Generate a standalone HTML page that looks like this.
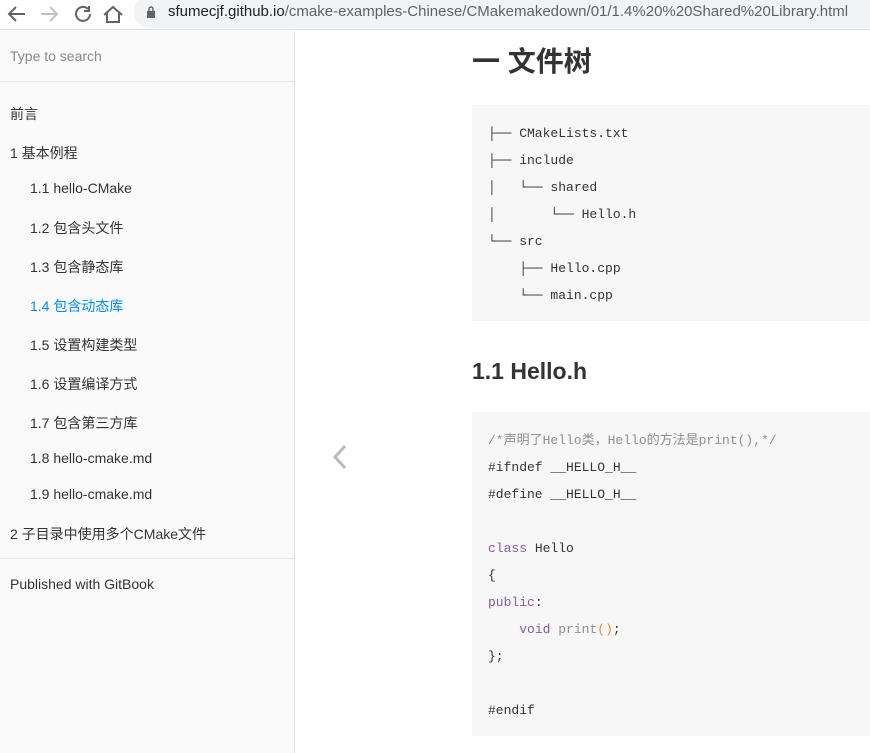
<!DOCTYPE html>
<html><head><meta charset="utf-8"><style>
*{margin:0;padding:0;box-sizing:border-box}
body{width:870px;height:753px;overflow:hidden;background:#fff;font-family:"Liberation Sans","Noto Sans CJK SC",sans-serif;position:relative}
.bar{position:absolute;left:0;top:0;width:870px;height:30px;background:#fff;border-bottom:1px solid #dadce0}
.url{position:absolute;left:134px;top:-4px;width:760px;height:32px;background:#f1f3f4;border-radius:16px;font-size:15px;line-height:32px;padding-left:34px;color:#202124}
.url span{color:#5f6368}
.side{position:absolute;left:0;top:31px;width:295px;height:722px;background:#fafafa;border-right:1px solid #e6e6e6}
.search{height:51px;border-bottom:1px solid #e6e6e6;font-size:14px;color:#888;padding:17px 10px}
.nav{font-size:14px;color:#333;position:absolute;left:10px}
.sub{left:30px}
h1{position:absolute;left:472px;top:40px;font-size:28px;font-weight:bold;color:#333}
h2{position:absolute;left:472px;top:358px;font-size:23px;font-weight:bold;color:#333}
pre{position:absolute;left:472px;width:398px;background:#f7f7f7;font-family:"Liberation Mono","Noto Sans CJK SC",monospace;font-size:13px;line-height:27px;color:#333;padding:15px 16px 14px}
.c{color:#8e908c}.k{color:#8959a8}.o{color:#f5871f}
</style></head><body>
<div class="bar">
<svg style="position:absolute;left:0;top:3px" width="130" height="22" fill="none" stroke-width="2">
<path d="M25 11H10M16 4l-7 7 7 7" stroke="#5f6368"/>
<path d="M41 11h15M50 4l7 7-7 7" stroke="#bdc1c6"/>
<path d="M88 6a7 7 0 1 0 2 5M89 3v5h-5" stroke="#5f6368"/>
<path d="M104 12l9-8 9 8M107 10v9h12v-9" stroke="#5f6368"/>
</svg>
<div class="url"><svg style="position:absolute;left:12px;top:10px" width="10" height="12"><rect x="1" y="5" width="8" height="7" fill="#5f6368"/><path d="M3 5V3a2 2 0 0 1 4 0v2" stroke="#5f6368" fill="none" stroke-width="1.5"/></svg>sfumecjf.github.io<span>/cmake-examples-Chinese/CMakemakedown/01/1.4%20%20Shared%20Library.html</span></div>
</div>
<div class="side">
<div class="search">Type to search</div>
<div class="nav" style="top:73px">前言</div>
<div class="nav" style="top:112px">1 基本例程</div>
<div class="nav sub" style="top:149px">1.1 hello-CMake</div>
<div class="nav sub" style="top:187px">1.2 包含头文件</div>
<div class="nav sub" style="top:226px">1.3 包含静态库</div>
<div class="nav sub" style="top:265px;color:#008cff">1.4 包含动态库</div>
<div class="nav sub" style="top:304px">1.5 设置构建类型</div>
<div class="nav sub" style="top:343px">1.6 设置编译方式</div>
<div class="nav sub" style="top:382px">1.7 包含第三方库</div>
<div class="nav sub" style="top:419px">1.8 hello-cmake.md</div>
<div class="nav sub" style="top:455px">1.9 hello-cmake.md</div>
<div class="nav" style="top:493px">2 子目录中使用多个CMake文件</div>
<div style="position:absolute;top:527px;left:0;width:294px;border-top:1px solid #e6e6e6"></div>
<div class="nav" style="top:545px">Published with GitBook</div>
</div>
<svg style="position:absolute;left:330px;top:444px" width="20" height="26"><path d="M15 2 5 13l10 11" stroke="#bbb" stroke-width="3" fill="none"/></svg>
<h1>一 文件树</h1>
<pre style="top:105px;height:216px">├── CMakeLists.txt
├── include
│   └── shared
│       └── Hello.h
└── src
    ├── Hello.cpp
    └── main.cpp</pre>
<h2>1.1 Hello.h</h2>
<pre style="top:412px;height:324px"><span class="c">/*声明了Hello类，Hello的方法是print(),*/</span>
#ifndef __HELLO_H__
#define __HELLO_H__

<span class="k">class</span> Hello
{
<span class="k">public</span>:
    <span class="k">void</span> <span class="c">print</span><span class="o">()</span>;
};

#endif</pre>
</body></html>
